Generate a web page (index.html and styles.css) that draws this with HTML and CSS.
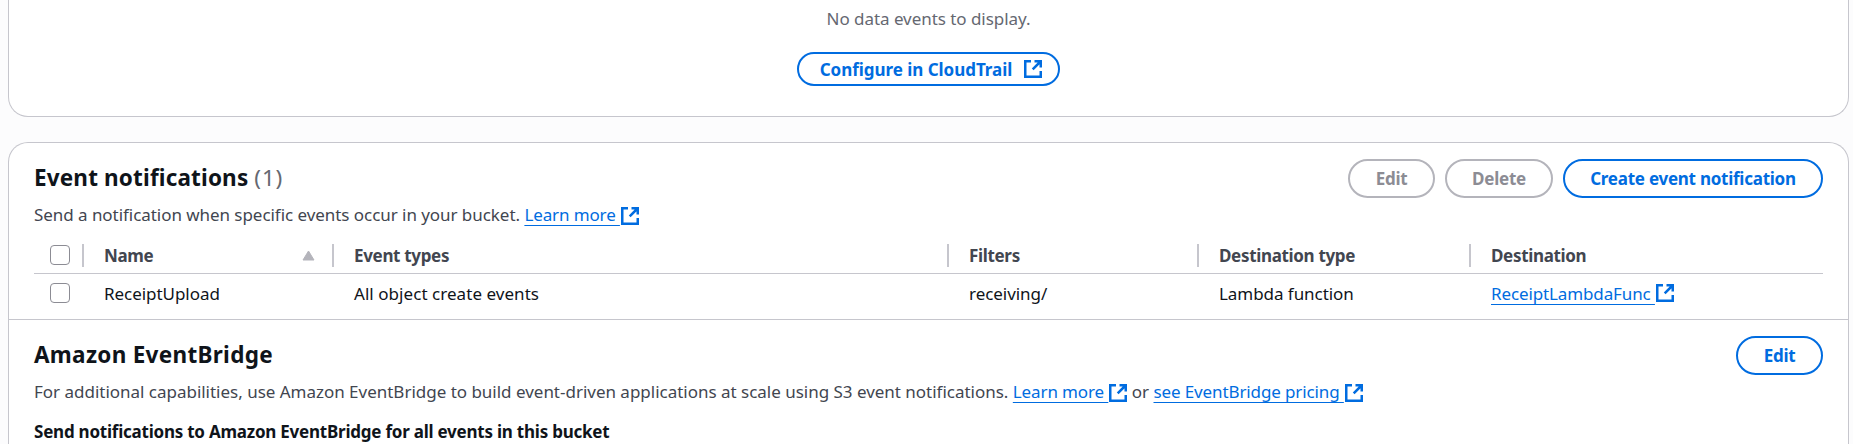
FILE: index.html
```html
<!DOCTYPE html>
<html lang="en">
<head>
<meta charset="utf-8">
<title>Event notifications</title>
<link rel="stylesheet" href="styles.css">
</head>
<body>
<svg class="defs" width="0" height="0" aria-hidden="true">
  <symbol id="external" viewBox="0 0 18 18">
    <path d="M7 1.25H1.25V16.75H16.75V11M10.5 1.25H16.75V7.5M16.5 1.5L8.7 9.3" fill="none" stroke="currentColor" stroke-width="2.5"/>
  </symbol>
</svg>
<main class="page">
  <section class="card card-top">
    <p class="empty">No data events to display.</p>
    <a class="btn btn-small"><span>Configure in CloudTrail</span><svg class="icon"><use href="#external"/></svg></a>
  </section>

  <section class="card card-events">
    <div class="panel">
      <header class="head">
        <h2 class="title title-notifications">Event notifications <span class="count">(1)</span></h2>
        <div class="actions">
          <button class="btn disabled btn-edit" disabled>Edit</button>
          <button class="btn disabled btn-delete" disabled>Delete</button>
          <button class="btn btn-create">Create event notification</button>
        </div>
      </header>
      <p class="desc">Send a notification when specific events occur in your bucket. <a class="link learn">Learn more&nbsp;</a><svg class="icon link-icon"><use href="#external"/></svg></p>
      <div class="table">
        <div class="row row-head">
          <div class="cell check"><span class="box"></span></div>
          <div class="cell">Name<svg class="sort" viewBox="0 0 13 11"><path d="M6.5 1L12 10H1Z" fill="#b4b4bb" stroke="#b4b4bb" stroke-linejoin="round"/></svg></div>
          <div class="cell">Event types</div>
          <div class="cell">Filters</div>
          <div class="cell">Destination type</div>
          <div class="cell">Destination</div>
        </div>
        <div class="row">
          <div class="cell check"><span class="box"></span></div>
          <div class="cell">ReceiptUpload</div>
          <div class="cell wide">All object create events</div>
          <div class="cell">receiving/</div>
          <div class="cell">Lambda function</div>
          <div class="cell"><a class="link func">ReceiptLambdaFunc&nbsp;</a><svg class="icon link-icon"><use href="#external"/></svg></div>
        </div>
      </div>
    </div>

    <div class="panel panel-bridge">
      <header class="head">
        <h2 class="title title-bridge">Amazon EventBridge</h2>
        <button class="btn btn-edit">Edit</button>
      </header>
      <p class="desc desc-bridge">For additional capabilities, use Amazon EventBridge to build event-driven applications at scale using S3 event notifications. <a class="link learn">Learn more&nbsp;</a><svg class="icon link-icon"><use href="#external"/></svg><span class="or"> or </span><a class="link pricing">see EventBridge pricing&nbsp;</a><svg class="icon link-icon"><use href="#external"/></svg></p>
      <p class="label">Send notifications to Amazon EventBridge for all events in this bucket</p>
    </div>
  </section>
</main>
</body>
</html>
```
FILE: styles.css
```css
* { box-sizing: border-box; }
html, body { height: 100%; }
body {
  margin: 0;
  background: #fcfcfd;
  color: #0f141a;
  font: 400 17px/25px "Noto Sans", sans-serif;
  letter-spacing: -0.05px;
}
h2, p { margin: 0; }
.defs { position: absolute; }
.page {
  display: flex;
  flex-direction: column;
  gap: 25px;
  height: 100%;
  padding: 0 4px 0 8px;
}
.card {
  background: #fff;
  border: 1px solid #c6c6cd;
  border-radius: 20px;
}
.card-top {
  display: flex;
  flex-direction: column;
  align-items: center;
  gap: 21px;
  flex: none;
  height: 117px;
  padding-top: 6px;
  border-top: 0;
  border-radius: 0 0 20px 20px;
}
.card-events {
  flex: 1;
  border-bottom: 0;
  border-radius: 20px 20px 0 0;
}
.empty { color: #656871; }

.btn {
  display: flex;
  align-items: center;
  justify-content: center;
  height: 39px;
  padding: 0;
  border: 2px solid #006ce0;
  border-radius: 20px;
  background: #fff;
  color: #006ce0;
  font: 700 17px/25px "Noto Sans", sans-serif;
  letter-spacing: -0.25px;
  white-space: nowrap;
}
.btn-small {
  gap: 12px;
  width: 263px;
  height: 34px;
  padding-left: 5px;
  letter-spacing: -0.03px;
}
.btn-edit { width: 87px; }
.btn-delete { width: 108px; }
.btn-create { width: 260px; }
.disabled { border-color: #b4b4bb; color: #8c8c94; }

.icon { width: 18px; height: 18px; flex: none; color: #006ce0; }
.link-icon { margin-left: 1px; vertical-align: -4px; }

.panel {
  height: 177px;
  padding: 16px 25px 0;
  border-bottom: 1px solid #c6c6cd;
}
.panel-bridge { height: 124px; border-bottom: 0; }
.head {
  display: flex;
  justify-content: space-between;
  align-items: flex-start;
  height: 39px;
}
.title {
  padding-top: 3px;
  font-size: 22.5px;
  line-height: 32px;
}
.title-notifications { letter-spacing: 0.16px; }
.title-bridge { letter-spacing: 0.3px; }
.count { font-weight: 400; letter-spacing: 0.8px; color: #656871; }
.actions { display: flex; gap: 10px; }

.desc { margin-top: 4px; color: #424650; white-space: nowrap; }
.desc-bridge { letter-spacing: -0.015px; }
.link {
  color: #006ce0;
  text-decoration: underline 1px;
  text-underline-offset: 4px;
  text-decoration-skip-ink: none;
}
.learn { letter-spacing: -0.12px; }
.func { letter-spacing: -0.12px; }
.pricing { letter-spacing: -0.12px; }
.or { letter-spacing: 0; }
.label { margin-top: 15px; font-weight: 700; letter-spacing: -0.23px; }

.table { margin-top: 10px; }
.row {
  display: grid;
  grid-template-columns: 50px 250px 615px 250px 272px 1fr;
  align-items: center;
  height: 38px;
}
.row-head {
  align-items: start;
  height: 37px;
  padding-top: 7px;
  border-bottom: 1px solid #c6c6cd;
  color: #424650;
  font-weight: 700;
  letter-spacing: -0.33px;
}
.cell {
  display: flex;
  align-items: center;
  justify-content: space-between;
  padding-left: 20px;
}
.cell:last-child { justify-content: flex-start; }
.check { padding-left: 16px; }
.wide { letter-spacing: 0.05px; }
.row-head .cell {
  height: 23px;
  padding-bottom: 1px;
  border-right: 2px solid #c6c6cd;
}
.row-head .cell:last-child { border-right: 0; }
.box {
  width: 20px;
  height: 20px;
  border: 1.5px solid #8c8c94;
  border-radius: 4px;
  background: #fff;
}
.row-head .box { margin-bottom: 1px; }
.sort { width: 13px; height: 11px; margin-right: 17px; }
```
